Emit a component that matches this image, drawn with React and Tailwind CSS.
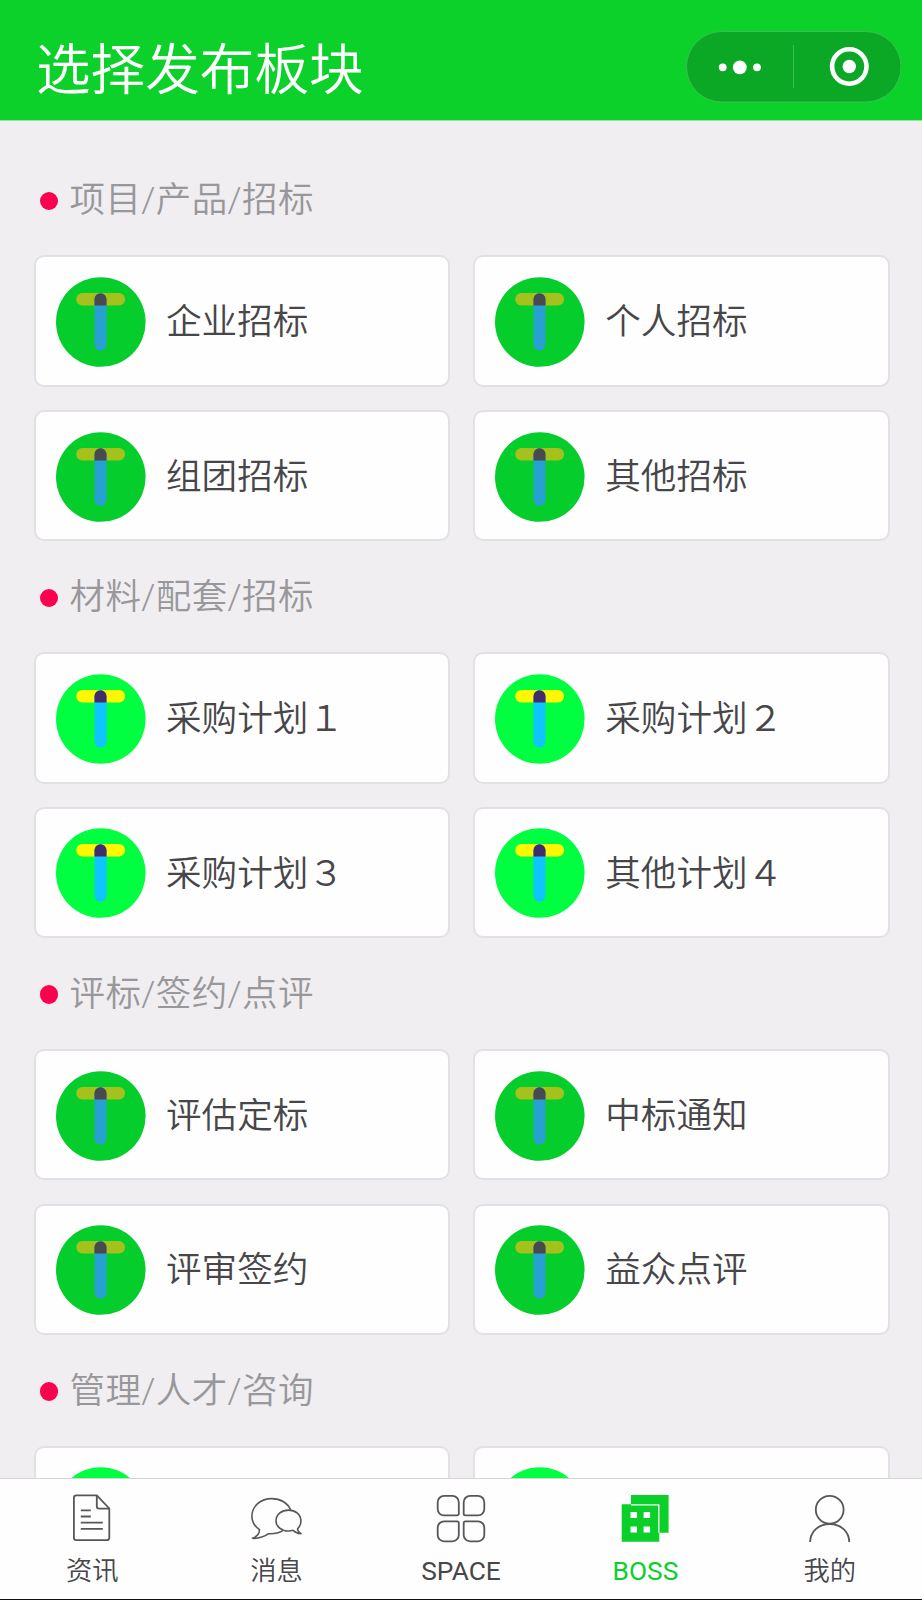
import React from "react";

const sections = [
  { title: "项目/产品/招标", muted: true, items: ["企业招标", "个人招标", "组团招标", "其他招标"] },
  { title: "材料/配套/招标", muted: false, items: ["采购计划１", "采购计划２", "采购计划３", "其他计划４"] },
  { title: "评标/签约/点评", muted: true, items: ["评估定标", "中标通知", "评审签约", "益众点评"] },
  { title: "管理/人才/咨询", muted: false, items: ["", ""] },
];

const HammerIcon = ({ muted }) => (
  <svg viewBox="0 0 90 90" className="mt-[2px] h-[90px] w-[90px] shrink-0">
    <circle cx="44.8" cy="45" r="44.8" fill={muted ? "#05cd2c" : "#00ff40"} />
    <rect x="20.3" y="16" width="48.7" height="12.6" rx="6" fill={muted ? "#a5c11c" : "#fdf800"} />
    <rect x="38.5" y="16.2" width="12" height="57.6" rx="6" fill={muted ? "#27a0d2" : "#0fc5ff"} />
    <path d="M38.5 28.6v-6.4a6 6 0 0 1 12 0v6.4z" fill={muted ? "#484a4d" : "#432c6c"} />
  </svg>
);

const TabIcon = ({ name }) => (
  <svg
    viewBox="0 0 56 50"
    className="h-[50px] w-[56px]"
    fill="none"
    stroke="#58565a"
    strokeWidth="1.8"
    strokeLinejoin="round"
  >
    {name === "news" && (
      <>
        <path d="M12.3 1.3h20.5L45.3 14.5V43.8a2.4 2.4 0 0 1-2.4 2.4H12.3a2.4 2.4 0 0 1-2.4-2.4V3.7a2.4 2.4 0 0 1 2.4-2.4z" />
        <path d="M32.8 1.3v11a2.4 2.4 0 0 0 2.4 2.4h10" />
        <path d="M16.8 16.3h10M16.8 22.5h10M16.8 28.7h22M16.8 34.8h22" />
      </>
    )}
    {name === "message" && (
      <g strokeWidth="1.6">
        <path d="M41.8 16.3C39 9 31.5 4.6 22.8 4.6 11.5 4.6 2.9 12.3 2.9 22.3c0 6 2.6 9.9 7.6 13.3C10.5 39.3 8 42.6 3.5 44.3c6 .3 11.5-1.2 16-4.6 5.5.3 10.3-.6 14.3-3.1" />
        <path d="M48.5 35c2-2 3.4-5 3.4-8.3 0-6-5.3-10.6-12.4-10.6s-12.5 4.6-12.5 10.6S32.5 37 39.5 37c1.7 0 3.2-.3 4.5-.7 2.2 2 5 3.2 8 3.3-2-1-3.3-2.6-3.5-4.6z" />
      </g>
    )}
    {name === "space" && (
      <>
        <path d="M11 1.9h8.5a6.3 6.3 0 0 1 6.3 6.3v11.6a1.6 1.6 0 0 1-1.6 1.6H11a6.3 6.3 0 0 1-6.3-6.3V8.2A6.3 6.3 0 0 1 11 1.9z" />
        <path d="M37 1.9h8a6.3 6.3 0 0 1 6.3 6.3v6.9a6.3 6.3 0 0 1-6.3 6.3H32.3a1.6 1.6 0 0 1-1.6-1.6V8.2A6.3 6.3 0 0 1 37 1.9z" />
        <path d="M11 27.4h13.2a1.6 1.6 0 0 1 1.6 1.6v12a6.3 6.3 0 0 1-6.3 6.3H11A6.3 6.3 0 0 1 4.7 41v-7.3a6.3 6.3 0 0 1 6.3-6.3z" />
        <path d="M32.3 27.4H45a6.3 6.3 0 0 1 6.3 6.3V41a6.3 6.3 0 0 1-6.3 6.3h-8a6.3 6.3 0 0 1-6.3-6.3V29a1.6 1.6 0 0 1 1.6-1.6z" />
      </>
    )}
    {name === "boss" && (
      <g stroke="none" fill="#0bd02a">
        <path d="M14 1h37.6v37.7H14z" />
        <path d="M4.7 10.3h37.6v37.4H4.7z" />
        <path d="M14 10.9h27.8v27.8" fill="none" stroke="#fff" strokeWidth="1.3" strokeLinejoin="miter" />
        <path d="M13.5 18h6.5v6h-6.5zM26.6 18h6.5v6h-6.5zM13.5 32.5h6.5v6h-6.5zM26.6 32.5h6.5v6h-6.5z" fill="#fff" />
      </g>
    )}
    {name === "mine" && (
      <>
        <circle cx="27.7" cy="15.8" r="13.9" />
        <path d="M8.1 48C8.3 37.5 16.4 30 27.7 30S47.1 37.5 47.3 48" />
      </>
    )}
  </svg>
);

const tabs = [
  { id: "news", label: "资讯" },
  { id: "message", label: "消息" },
  { id: "space", label: "SPACE", latin: true },
  { id: "boss", label: "BOSS", latin: true, active: true },
  { id: "mine", label: "我的" },
];

const App = () => {
  return (
    <div className="flex h-[1600px] w-[922px] flex-col overflow-hidden bg-[#f0eef1] font-['Noto_Sans_CJK_SC',sans-serif] font-[350]">
      <header className="flex h-[121px] shrink-0 items-center justify-between border-b border-[#9fdda8] bg-[#0dd12b] pt-[13px] pr-[20px] pl-[36px]">
        <h1 className="text-[54.6px] leading-none text-white">选择发布板块</h1>
        <svg viewBox="0 0 216 72" className="h-[72px] w-[216px]">
          <rect x="0.5" y="0.5" width="214.5" height="70.5" rx="35.2" fill="#0ba825" stroke="#3dbd51" />
          <path d="M107.5 14v43" stroke="#3dbd51" />
          <g fill="#fff">
            <circle cx="36.7" cy="36.3" r="3.9" />
            <circle cx="53.8" cy="36.3" r="6.9" />
            <circle cx="71" cy="36.3" r="3.9" />
            <circle cx="163.3" cy="35.5" r="6.7" />
          </g>
          <circle cx="163.3" cy="35.5" r="17.2" fill="none" stroke="#fff" strokeWidth="4.6" />
        </svg>
      </header>

      <main className="min-h-0 flex-1 overflow-hidden pt-[23.6px] pr-[32.5px] pl-[34px]">
        {sections.map((section) => (
          <section key={section.title}>
            <div className="flex h-[110.8px] items-center gap-[11.5px] pl-[5.5px]">
              <span className="mt-[2px] h-[18.5px] w-[18.5px] rounded-full bg-[#fb0251]" />
              <h2 className="pt-[2px] font-[Roboto,'Noto_Sans_CJK_SC',sans-serif] text-[35.5px] leading-none tracking-[0.4px] text-[#98979a]">
                {section.title}
              </h2>
            </div>
            <div className="grid grid-cols-2 gap-x-[23px] gap-y-[23.2px]">
              {section.items.map((item, i) => (
                <div
                  key={i}
                  className="flex h-[131.4px] items-center gap-[20px] rounded-[10px] border-2 border-[#e2e0e4] bg-[#fefefe] pl-[20px]"
                >
                  <HammerIcon muted={section.muted} />
                  <span className="pb-[4px] text-[35.6px] leading-none text-[#474649]">{item}</span>
                </div>
              ))}
            </div>
          </section>
        ))}
      </main>

      <nav className="flex h-[122px] shrink-0 border-t border-b border-t-[#d5d3d6] border-b-[#111] bg-[#fefefe] pt-[15px]">
        {tabs.map((tab) => (
          <div key={tab.id} className="flex flex-1 flex-col items-center">
            <TabIcon name={tab.id} />
            <span
              className={`mt-[14px] font-[Roboto,'Noto_Sans_CJK_SC',sans-serif] text-[26.3px] leading-none ${
                tab.latin ? "font-normal" : ""
              } ${tab.active ? "text-[#0bd02a]" : "text-[#474649]"}`}
            >
              {tab.label}
            </span>
          </div>
        ))}
      </nav>
    </div>
  );
};

export default App;
